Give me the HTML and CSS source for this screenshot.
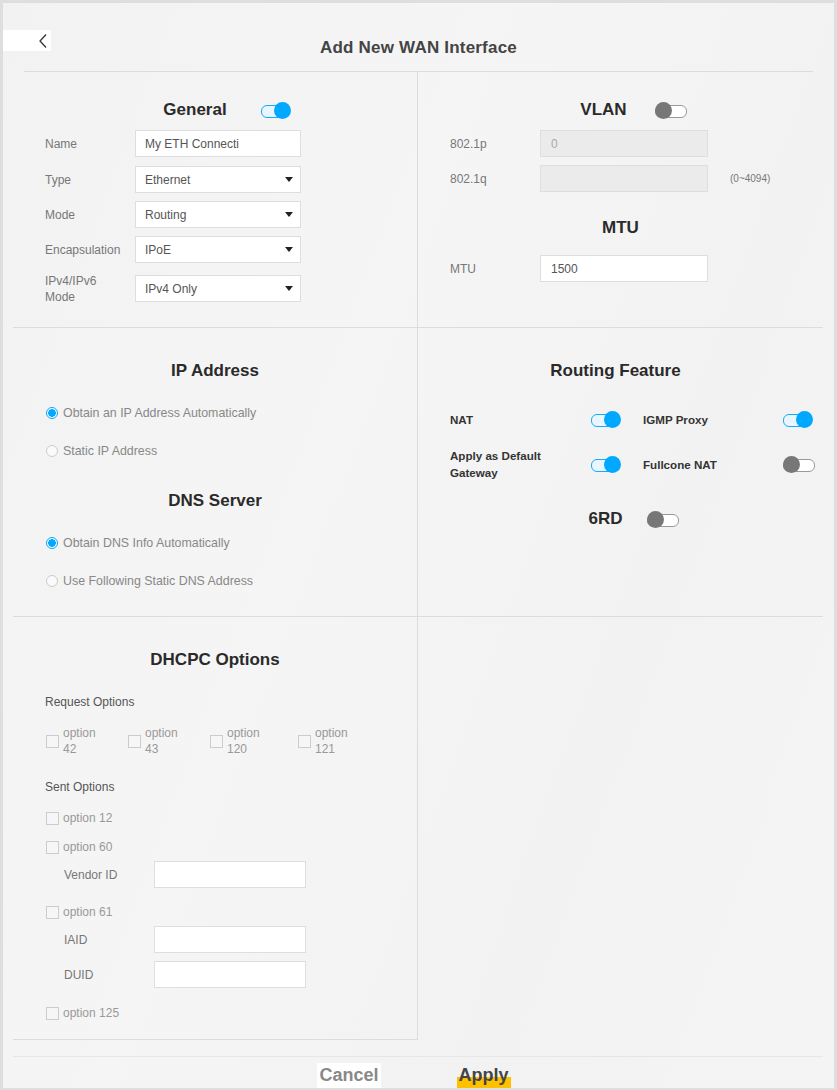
FILE: index.html
```html
<!DOCTYPE html>
<html>
<head>
<meta charset="utf-8">
<link rel="stylesheet" href="styles.css">
</head>
<body>
<div class="panel">
  <div class="header">
    <div class="back"><svg width="10" height="16" viewBox="0 0 10 16"><path d="M8 1.5 L2 8 L8 14.5" fill="none" stroke="#333" stroke-width="1.3"/></svg></div>
    <div class="title">Add New WAN Interface</div>
  </div>
  <div class="grid">
    <div class="cell c1">
      <div class="sec-head"><span class="sec-title">General</span><span class="toggle on"></span></div>
      <div class="frow"><span class="flabel">Name</span><span class="input">My ETH Connecti</span></div>
      <div class="frow r-type"><span class="flabel">Type</span><span class="input select">Ethernet<i class="arrow"></i></span></div>
      <div class="frow"><span class="flabel">Mode</span><span class="input select">Routing<i class="arrow"></i></span></div>
      <div class="frow"><span class="flabel">Encapsulation</span><span class="input select">IPoE<i class="arrow"></i></span></div>
      <div class="frow tall"><span class="flabel">IPv4/IPv6<br>Mode</span><span class="input select">IPv4 Only<i class="arrow"></i></span></div>
    </div>
    <div class="cell c2">
      <div class="sec-head"><span class="sec-title">VLAN</span><span class="toggle off"></span></div>
      <div class="frow"><span class="flabel">802.1p</span><span class="input wide disabled">0</span></div>
      <div class="frow"><span class="flabel">802.1q</span><span class="input wide disabled"></span><span class="hint">(0~4094)</span></div>
      <div class="sec-head plain mtu"><span class="sec-title">MTU</span></div>
      <div class="frow"><span class="flabel">MTU</span><span class="input wide">1500</span></div>
    </div>
    <div class="cell c3">
      <div class="sec-head plain first"><span class="sec-title">IP Address</span></div>
      <div class="radio sel"><i></i>Obtain an IP Address Automatically</div>
      <div class="radio"><i></i>Static IP Address</div>
      <div class="sec-head plain dns"><span class="sec-title">DNS Server</span></div>
      <div class="radio sel"><i></i>Obtain DNS Info Automatically</div>
      <div class="radio"><i></i>Use Following Static DNS Address</div>
    </div>
    <div class="cell c4">
      <div class="sec-head plain first"><span class="sec-title">Routing Feature</span></div>
      <div class="rgrid">
        <div class="ritem r1"><span class="rlabel">NAT</span><span class="toggle on"></span></div>
        <div class="ritem r1"><span class="rlabel">IGMP Proxy</span><span class="toggle on"></span></div>
        <div class="ritem r2"><span class="rlabel">Apply as Default<br>Gateway</span><span class="toggle on"></span></div>
        <div class="ritem r2"><span class="rlabel">Fullcone NAT</span><span class="toggle off"></span></div>
      </div>
      <div class="sec-head sixrd"><span class="sec-title">6RD</span><span class="toggle off"></span></div>
    </div>
    <div class="cell c5">
      <div class="sec-head plain first"><span class="sec-title">DHCPC Options</span></div>
      <div class="sublabel req-label">Request Options</div>
      <div class="reqs">
        <div class="req w1"><i class="cb"></i><span>option<br>42</span></div>
        <div class="req w1"><i class="cb"></i><span>option<br>43</span></div>
        <div class="req w2"><i class="cb"></i><span>option<br>120</span></div>
        <div class="req"><i class="cb"></i><span>option<br>121</span></div>
      </div>
      <div class="sublabel sent">Sent Options</div>
      <div class="check c12"><i class="cb"></i>option 12</div>
      <div class="check c60"><i class="cb"></i>option 60</div>
      <div class="srow vid"><span class="slabel">Vendor ID</span><span class="input sinput"></span></div>
      <div class="check c61"><i class="cb"></i>option 61</div>
      <div class="srow iaid"><span class="slabel">IAID</span><span class="input sinput"></span></div>
      <div class="srow duid"><span class="slabel">DUID</span><span class="input sinput"></span></div>
      <div class="check c125"><i class="cb"></i>option 125</div>
    </div>
    <div class="cell c6"></div>
  </div>
  <div class="footer">
    <span class="btn cancel">Cancel</span>
    <span class="btn apply">Apply</span>
  </div>
</div>
</body>
</html>
```

FILE: styles.css
```css
* { box-sizing: border-box; }
html, body { margin: 0; padding: 0; }
body {
  background: #dedede;
  font-family: "Liberation Sans", Arial, sans-serif;
  width: 837px;
  height: 1090px;
  overflow: hidden;
}
.panel {
  margin: 3px 3px 0 3px;
  height: 1085px;
  background: linear-gradient(110deg, #f2f2f2 0%, #f5f5f5 40%, #f2f2f2 70%, #f4f4f4 100%);
  display: flex;
  flex-direction: column;
}
.header {
  position: relative;
  height: 69px;
  margin: 0 21px;
  border-bottom: 1px solid #dcdcdc;
  display: flex;
  justify-content: center;
}
.back {
  position: absolute;
  left: -21px;
  top: 27px;
  width: 48px;
  height: 21px;
  background: #fff;
  display: flex;
  justify-content: flex-end;
  align-items: center;
  padding-right: 3px;
}
.title {
  margin-top: 35px;
  font-size: 17px;
  font-weight: bold;
  color: #444;
  letter-spacing: 0.2px;
}
.grid {
  margin: 0 11px 0 10px;
  display: grid;
  grid-template-columns: 405px 405px;
  grid-template-rows: 256px 289px 423px;
}
.cell { padding-left: 32px; }
.c1, .c3, .c5 { border-right: 1px solid #dcdcdc; }
.c1, .c2, .c3, .c4, .c5 { border-bottom: 1px solid #dcdcdc; }
.sec-head {
  display: flex;
  justify-content: center;
  align-items: center;
  gap: 34px;
  padding-left: 24px;
  margin-right: 32px;
  height: 20px;
  margin-top: 28px;
  margin-bottom: 10px;
}
.sec-head.plain { padding-left: 0; }
.sec-head.first { margin-top: 33px; margin-bottom: 0; }
.sec-title {
  font-size: 17px;
  font-weight: bold;
  color: #2a2a2a;
}
.frow {
  display: flex;
  align-items: center;
  height: 27px;
  margin-bottom: 8px;
}
.frow.r-type { margin-top: 9px; }
.frow.tall { margin-top: 12px; }
.flabel {
  width: 90px;
  font-size: 12px;
  line-height: 16px;
  color: #777;
}
.input {
  display: flex;
  align-items: center;
  width: 166px;
  height: 27px;
  background: #fff;
  border: 1px solid #dedede;
  padding-left: 9px;
  font-size: 12px;
  color: #555;
}
.input.wide { width: 168px; padding-left: 10px; }
.input.disabled { background: #ebebeb; color: #aaa; }
.select { justify-content: space-between; padding-right: 7px; }
.arrow {
  width: 0; height: 0;
  border-left: 4px solid transparent;
  border-right: 4px solid transparent;
  border-top: 5px solid #222;
}
.hint { margin-left: 22px; font-size: 10px; color: #777; }
.mtu { margin-top: 26px; margin-bottom: 17px; }

.toggle {
  position: relative;
  display: inline-block;
  width: 30px;
  height: 17px;
}
.toggle::before {
  content: "";
  position: absolute;
  left: 0; top: 3px;
  width: 30px; height: 11px;
  border-radius: 6px;
  background: #fff;
  border: 1px solid #999;
}
.toggle::after {
  content: "";
  position: absolute;
  top: 0;
  width: 17px; height: 17px;
  border-radius: 50%;
  background: #777;
  left: 0;
}
.toggle.on::before { border-color: #14aaff; background: #eaf6ff; width: 24px; }
.toggle.on::after { background: #00a8ff; left: 13px; }
.sec-head .toggle.off { margin-left: -6px; }

.radio {
  display: flex;
  align-items: center;
  height: 16px;
  margin-top: 22px;
  font-size: 12.4px;
  color: #888;
}
.c3 .sec-head + .radio { margin-top: 24px; }
.radio i {
  width: 12px; height: 12px;
  border-radius: 50%;
  border: 1px solid #ccc;
  background: #fafafa;
  margin-left: 1px;
  margin-right: 5px;
}
.radio.sel i {
  border-color: #00a8ff;
  background: radial-gradient(circle, #00a8ff 0 3.6px, #fff 4px);
}
.dns { margin-top: 32px; margin-bottom: 0; }

.c4 { padding-right: 10px; }
.rgrid {
  display: grid;
  grid-template-columns: 171px 170px;
  column-gap: 22px;
  margin-top: 30px;
}
.ritem {
  display: flex;
  justify-content: space-between;
  align-items: center;
}
.ritem.r1 { height: 17px; }
.ritem.r2 { height: 34px; margin-top: 19px; }
.rlabel { font-size: 11.6px; font-weight: bold; color: #333; line-height: 17px; }
.sixrd { margin-top: 28px; margin-right: 22px; gap: 30px; }

.sublabel { font-size: 12px; color: #555; height: 16px; }
.req-label { margin-top: 25px; }
.reqs { display: flex; margin-top: 14px; height: 32px; }
.req { display: flex; align-items: center; width: 82px; }
.req.w2 { width: 88px; }
.req span { font-size: 12px; color: #999; line-height: 16px; }
.cb {
  display: inline-block;
  width: 13px; height: 13px;
  border: 1px solid #ccc;
  background: #f6f6f6;
  margin-left: 1px;
  margin-right: 4px;
}
.sent { margin-top: 23px; }
.check { display: flex; align-items: center; height: 16px; font-size: 12px; color: #999; }
.c12 { margin-top: 14px; }
.c60 { margin-top: 13px; }
.c61 { margin-top: 16px; }
.c125 { margin-top: 17px; }
.srow { display: flex; align-items: center; height: 27px; }
.vid { margin-top: 6px; }
.iaid { margin-top: 6px; }
.duid { margin-top: 8px; }
.slabel { width: 109px; padding-left: 19px; font-size: 12px; color: #777; }
.sinput { width: 152px; }

.footer {
  margin: 16px 11px 0 10px;
  border-top: 1px solid #e6e6e6;
  flex: 1;
  display: flex;
  justify-content: center;
  align-items: flex-end;
  gap: 76px;
  padding-right: 8px;
}
.btn { font-size: 18px; font-weight: bold; height: 25px; line-height: 24px; padding: 0 2px; }
.cancel { color: #888; background: #fff; }
.apply { color: #444; background: linear-gradient(to bottom, transparent 0 14px, #ffc000 14px); }
```
